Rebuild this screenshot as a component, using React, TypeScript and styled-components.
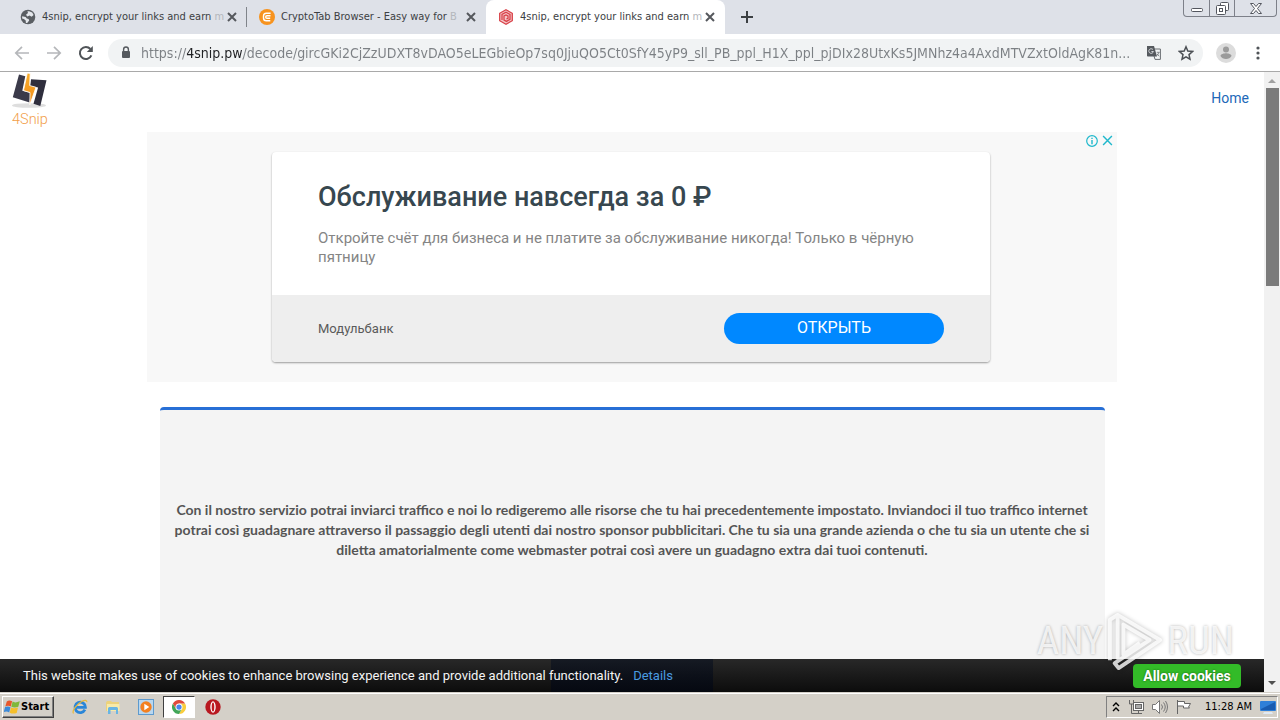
import React from "react";
import styled, { createGlobalStyle } from "styled-components";

const ui = `"DejaVu Sans Condensed", "DejaVu Sans", sans-serif`;

const GlobalStyle = createGlobalStyle`
  *, *::before, *::after { box-sizing: border-box; }
  body { margin: 0; background: #fff; font-family: Roboto, sans-serif; }
  button { border: 0; padding: 0; margin: 0; background: none; color: inherit; font: inherit; }
  h1, h2, p { margin: 0; }
  svg { display: block; flex: none; }
`;

const Desktop = styled.div`
  display: flex;
  flex-direction: column;
  height: 100vh;
  overflow: hidden;
`;

/* ---------- tab strip ---------- */

const TabStrip = styled.header`
  display: flex;
  align-items: flex-start;
  height: 34px;
  flex: none;
  padding: 0 3px 0 8px;
  background: #dee1e8;
`;

const Tab = styled.div<{ $active?: boolean; $divider?: boolean }>`
  position: relative;
  display: flex;
  align-items: center;
  gap: 6px;
  flex: 0 1 239px;
  min-width: 0;
  height: 34px;
  padding: 0 10px 0 12px;
  border-radius: 8px 8px 0 0;
  background: ${(p) => (p.$active ? "#fff" : "transparent")};

  &::after {
    content: "";
    position: absolute;
    right: 0;
    top: 7px;
    width: 1px;
    height: 20px;
    background: ${(p) => (p.$divider ? "#80848a" : "transparent")};
  }
`;

const TabTitle = styled.button`
  flex: 1;
  min-width: 0;
  white-space: nowrap;
  text-align: left;
  font: 11px/16px ${ui};
  color: #3c4043;
`;

const Faded = styled.span`
  color: #b4b7bc;
`;

const GlyphButton = styled.button<{ $w?: number }>`
  display: flex;
  align-items: center;
  justify-content: center;
  flex: none;
  width: ${(p) => p.$w ?? 32}px;
  height: 100%;
`;

const WindowButtons = styled.div`
  display: flex;
  margin-left: auto;
  height: 17px;
  border: 1px solid #7d8089;
  border-top: 0;
  border-radius: 0 0 4px 4px;

  button + button { border-left: 1px solid #7d8089; }
`;

/* ---------- toolbar ---------- */

const Toolbar = styled.div`
  display: flex;
  align-items: center;
  flex: none;
  height: 38px;
  padding: 0 6px;
  background: #fff;
  border-bottom: 1px solid #a9a9a9;
`;

const Omnibox = styled.div`
  display: flex;
  align-items: center;
  flex: 1;
  min-width: 0;
  height: 28px;
  margin: 0 7px 0 6px;
  padding: 0 1px 0 10px;
  border-radius: 14px;
  background: #f1f3f4;
`;

const Address = styled.input`
  flex: 1;
  min-width: 0;
  height: 20px;
  margin: 0 6px 0 7px;
  padding: 0;
  border: 0;
  outline: 0;
  font: 14px/20px ${ui};
  color: #74787c;
  background: linear-gradient(90deg, #7c8084 46px, #202124 46px, #202124 102px, #7c8084 102px);
  background-clip: text;
  -webkit-text-fill-color: transparent;
`;

/* ---------- page ---------- */

const Viewport = styled.div`
  position: relative;
  display: flex;
  flex: 1;
  min-height: 0;
  overflow: hidden;
  background: #fff;
`;

const Page = styled.main`
  flex: 1;
  min-width: 0;
  display: flex;
  flex-direction: column;
  align-items: center;
  overflow: hidden;
`;

const SiteHeader = styled.div`
  display: flex;
  justify-content: space-between;
  width: 100%;
  height: 60px;
  flex: none;
  padding: 0 15px 0 12px;
`;

const HomeLink = styled.a`
  padding-top: 16px;
  font: 14px/20px Roboto, sans-serif;
  color: #2168b8;
  text-decoration: none;
`;

const AdBanner = styled.section`
  position: relative;
  flex: none;
  width: 970px;
  max-width: 100%;
  height: 250px;
  padding: 20px 127px 20px 125px;
  background: #f8f8f8;
`;

const AdChoices = styled.div`
  position: absolute;
  top: 0;
  right: 3px;
  display: flex;
  gap: 3px;
  height: 17px;
`;

const AdCard = styled.article`
  display: flex;
  flex-direction: column;
  height: 210px;
  overflow: hidden;
  border-radius: 4px;
  background: #fff;
  box-shadow: 0 1px 2px rgba(0, 0, 0, 0.38);
`;

const AdCopy = styled.div`
  flex: 1;
  padding: 28px 46px 0;
`;

const AdTitle = styled.h1`
  font: 500 27px/34px Roboto, sans-serif;
  color: #37474f;
`;

const AdText = styled.p`
  margin-top: 15px;
  font: 15px/19px Roboto, sans-serif;
  color: #858585;
`;

const AdFooter = styled.div`
  display: flex;
  align-items: center;
  justify-content: space-between;
  height: 67px;
  padding: 0 46px;
  background: #eee;
  font: 13px/20px Roboto, sans-serif;
  color: #5a5a5a;
`;

const OpenButton = styled.button`
  width: 220px;
  height: 31px;
  padding-bottom: 2px;
  border-radius: 16px;
  background: #0088ff;
  color: #fff;
  font: 16px/20px Roboto, sans-serif;
`;

const InfoPanel = styled.section`
  flex: none;
  width: 945px;
  max-width: 100%;
  height: 400px;
  margin-top: 25px;
  padding: 90px 14px;
  border-top: 3px solid #276fd6;
  border-radius: 4px;
  background: #f4f4f4;
  text-align: center;
  font: bold 14px/20px Lato, sans-serif;
  color: #555;
`;

const ScrollBar = styled.div`
  display: flex;
  flex-direction: column;
  flex: none;
  width: 16px;
  background: #f1f1f1;
`;

const ScrollThumb = styled.div`
  width: 13px;
  height: 198px;
  margin: 0 auto auto;
  background: #7b7b7b;
`;

const CookieBar = styled.aside`
  position: absolute;
  left: 0;
  right: 16px;
  bottom: 0;
  display: flex;
  align-items: center;
  height: 33px;
  padding: 0 23px;
  background:
    linear-gradient(rgba(0, 10, 30, 0.45), rgba(0, 6, 20, 0.6)) center / 162px 100% no-repeat,
    linear-gradient(#282828, #0c0c0c);
  color: #f4f4f4;
  font: 13px/20px Roboto, sans-serif;

  a { margin-left: 10px; color: #4a9be0; text-decoration: none; }
`;

const AllowButton = styled.button`
  width: 108px;
  height: 24px;
  margin-left: auto;
  border-radius: 4px;
  background: #33bb28;
  color: #fff;
  font: bold 14px/20px Roboto, sans-serif;
  text-shadow: 0 0 2px #14500e;
`;

const Watermark = styled.div`
  position: absolute;
  right: 46px;
  bottom: 18px;
  display: flex;
  align-items: center;
  gap: 4px;
  height: 66px;
  color: rgba(255, 255, 255, 0.8);
  font: 39px/44px "Roboto Condensed", Roboto, sans-serif;
  text-shadow: 0 0 3px rgba(0, 0, 0, 0.3);
  pointer-events: none;

  svg { filter: drop-shadow(0 0 2px rgba(0, 0, 0, 0.3)); }
`;

/* ---------- taskbar ---------- */

const Taskbar = styled.footer`
  display: flex;
  align-items: center;
  flex: none;
  height: 28px;
  padding: 1px 2px 0;
  border-top: 1px solid #d4d0c8;
  background: #d4d0c8;
  box-shadow: inset 0 1px #fff;
`;

const StartButton = styled.button`
  display: flex;
  align-items: center;
  gap: 1px;
  width: 52px;
  height: 22px;
  margin-right: 10px;
  padding-left: 1px;
  border: 1px solid;
  border-color: #fff #404040 #404040 #fff;
  box-shadow: inset -1px -1px #808080;
  font: bold 11px/16px ${ui};
  color: #000;
`;

const TaskItem = styled.button<{ $active?: boolean }>`
  display: flex;
  align-items: center;
  justify-content: center;
  width: 32px;
  height: 22px;
  margin-right: ${(p) => (p.$active ? 2 : 1)}px;
  border: 1px solid;
  border-color: ${(p) => (p.$active ? "#404040 #fff #fff #404040" : "transparent")};
  background: ${(p) => (p.$active ? "#fff" : "transparent")};
`;

const Tray = styled.div`
  display: flex;
  align-items: center;
  gap: 8px;
  height: 22px;
  margin-left: auto;
  padding: 0 1px 0 5px;
  border: 1px solid;
  border-color: #808080 #fff #fff #808080;
  font: 11px/16px ${ui};
  color: #000;

  time { margin-left: 5px; white-space: nowrap; }
`;

/* ---------- drawings ---------- */

const GlobeIcon = () => (
  <svg width="16" height="16" viewBox="0 0 16 16">
    <circle cx="8" cy="8" r="7.3" fill="#5a5e63" />
    <path d="M2.2 7.2 5.6 8l1.2 1.6 1.8.3.6 1.7-2 2.4-1.3.1-.2-2.5-1.8-1.6-1.8-.5zM7.4 2.2l1.8.1 3 1.3 1.4 2.5-2 1.7-2-1.2-2.3.8L6 5.7 8 4z" fill="#e4e7ec" />
  </svg>
);

const CryptoIcon = () => (
  <svg width="16" height="16" viewBox="0 0 16 16">
    <circle cx="8" cy="8" r="8" fill="#f7931e" />
    <path d="M11.6 4.2H7.3a2.8 2.8 0 0 0-2.8 2.8v2a2.8 2.8 0 0 0 2.8 2.8h4M11.5 6.7H8A1.3 1.3 0 0 0 8 9.3h3.2" fill="none" stroke="#fff" strokeWidth="1.4" />
  </svg>
);

const HexIcon = () => (
  <svg width="16" height="16" viewBox="0 0 16 16" fill="none" stroke="#d9434a">
    <path d="M8 .8 14.3 4.3v7.4L8 15.2 1.7 11.7V4.3z" fill="#f4c6c8" strokeWidth="1.3" />
    <path d="M4 11V5.5L8 3.3l4 2.2v4.8L8.5 12.4 6 11V7l2-1.1 2 1.1v2.3L8.4 10" strokeWidth="1.3" />
  </svg>
);

const CrossIcon = ({ size = 10, color = "#55585d", weight = 2 }) => (
  <svg width={size} height={size} viewBox="0 0 10 10">
    <path d="m1 1 8 8M9 1 1 9" stroke={color} strokeWidth={weight} />
  </svg>
);

const ArrowIcon = ({ back = false }) => (
  <svg width="16" height="16" viewBox="0 0 16 16" fill="none" stroke="#b5b7ba" strokeWidth="1.7">
    <path d={back ? "M15 8H2M8 1.8 1.8 8 8 14.2" : "M1 8h13M8 1.8 14.2 8 8 14.2"} />
  </svg>
);

const ReloadIcon = () => (
  <svg width="16" height="16" viewBox="0 0 16 16">
    <path d="M13.4 10.4A6 6 0 1 1 12.4 4" fill="none" stroke="#505458" strokeWidth="2" />
    <path d="M14.8 1v6H8.8z" fill="#505458" />
  </svg>
);

const LockIcon = () => (
  <svg width="16" height="16" viewBox="0 0 16 16">
    <path d="M5.6 6.500V4.400a2.400 2.400 0 0 1 4.800 0v2.100" fill="none" stroke="#55595e" strokeWidth="1.400" />
    <rect x="4" y="6" width="8" height="7" rx="1" fill="#55595e" />
  </svg>
);

const TranslateIcon = () => (
  <svg width="16" height="16" viewBox="0 0 16 16">
    <path d="M6 4h8.4v10.4H9z" fill="#f1f3f4" stroke="#6a6e73" />
    <path d="M1 1h7l3 10.6H1.8A.8.8 0 0 1 1 10.8z" fill="#55595e" />
    <path d="M7 4.7A2.3 2.3 0 1 0 7.4 6.5H5.4" fill="none" stroke="#dfe1e4" strokeWidth=".9" />
    <path d="M10.7 7.3h3M12.8 7.5c-.4 1.5-1.2 2.5-2 3.2M11.2 9c.4.7 1 1.5 2 2.2" fill="none" stroke="#6a6e73" strokeWidth=".8" />
  </svg>
);

const StarIcon = () => (
  <svg width="16" height="16" viewBox="0 0 16 16">
    <path d="m8 1.8 1.8 4.3 4.7.4-3.5 3.1 1 4.6L8 11.8l-4 2.4 1-4.6-3.5-3.1 4.7-.4z" fill="none" stroke="#4c5055" strokeWidth="1.5" />
  </svg>
);

const AvatarIcon = () => (
  <svg width="20" height="20" viewBox="0 0 20 20">
    <circle cx="10" cy="10" r="10" fill="#dcdcdc" />
    <circle cx="10" cy="6.5" r="3" fill="#9b9b9b" />
    <path d="M4.5 13c0-2 3.6-2.8 5.500-2.800s5.500.8 5.500 2.800c-1 2-3 3-5.500 3s-4.500-1-5.500-3z" fill="#9b9b9b" />
  </svg>
);

const DotsIcon = () => (
  <svg width="4" height="16" viewBox="0 0 4 16" fill="#505458">
    <circle cx="2" cy="3" r="1.6" />
    <circle cx="2" cy="8" r="1.6" />
    <circle cx="2" cy="13" r="1.6" />
  </svg>
);

const SiteLogo = () => (
  <svg width="36" height="56" viewBox="0 0 36 56" role="img" aria-label="4Snip">
    <defs>
      <linearGradient id="bolt" x1="0" y1="0" x2="0" y2="1">
        <stop offset="0" stopColor="#f9ad2b" />
        <stop offset="1" stopColor="#f08c1c" />
      </linearGradient>
    </defs>
    <ellipse cx="17" cy="33.500" rx="17" ry="2.300" fill="#dedede" />
    <path d="M7 2.500 13.300 4.200 10.300 18.800l8.200 2.200-.9 9.500L.8 25.200z" fill="#3b3a4a" />
    <path d="m19 7.300 15.500.9L28.300 34l-6.800-2.200 4.600-16.300-8-1.400z" fill="#2f2e3d" />
    <path d="m15.300 1 2.900.5-.5 12 6.300 1.800-6.200 17.500.2-12.300-6.500-2z" fill="url(#bolt)" stroke="#fff" strokeWidth=".8" />
    <text x="0" y="51.500" fontFamily="Roboto, sans-serif" fontWeight="300" fontSize="14.500" fill="#f2a04a">4Snip</text>
  </svg>
);

const WindowsIcon = () => (
  <svg width="16" height="16" viewBox="0 0 16 16">
    <path d="M2.800 2.500Q5 .5 8.100 2.200L6.800 7.400Q4 6 1.300 7.400z" fill="#e8572b" />
    <path d="M8.600 2.600Q11 4.300 15.800 2.300L14.300 7.800Q10.500 9.300 7.300 7.700z" fill="#7fb83a" />
    <path d="M1.100 8Q4 6.700 6.500 8.200L5.200 13.500Q2.500 11.900 -.3 13.200z" fill="#3c8ad8" />
    <path d="M7 8.500Q10 10 14 8.400L12.700 13.900Q9 15.300 5.700 13.700z" fill="#f5bf2b" />
  </svg>
);

const ExplorerIcon = () => (
  <svg width="16" height="16" viewBox="0 0 16 16" fill="none">
    <path d="M12.900 10.600A5.200 5.200 0 1 1 13.400 8.300H4" stroke="#2a86d8" strokeWidth="2.800" />
    <path d="M1.500 14.500C-.5 12 5 5 10 2.300c3-1.500 5-1.300 4.800.8" stroke="#e8b93a" strokeWidth="1.200" />
  </svg>
);

const FolderIcon = () => (
  <svg width="16" height="16" viewBox="0 0 16 16">
    <path d="M1 3.500 2 2h4l1 1h7v9H1z" fill="#ecd27c" />
    <path d="M2 5h12.500v7H2z" fill="#f8eaa8" />
    <path d="M3 15V9.500Q3 8 4.500 8h7Q13 8 13 9.500V15h-2v-4H5.500v4z" fill="#69b5e3" />
  </svg>
);

const MediaIcon = () => (
  <svg width="16" height="16" viewBox="0 0 16 16">
    <rect x=".5" y=".5" width="15" height="15" fill="#b9d7ef" stroke="#5d9ace" />
    <circle cx="8" cy="8" r="5.700" fill="#f38020" />
    <path d="M6.300 4.800 11.300 8l-5 3.200z" fill="#fff" />
  </svg>
);

const ChromeIcon = () => (
  <svg width="14" height="14" viewBox="0 0 16 16">
    <path d="M8 4h6.930A8 8 0 0 1 8 16l3.460-6z" fill="#f9cd3c" />
    <path d="M1.070 4A8 8 0 0 0 8 16l3.460-6L8 8 4.540 10z" fill="#41a658" />
    <path d="M1.070 4A8 8 0 0 1 14.930 4H8L4.540 10z" fill="#df4a3c" />
    <circle cx="8" cy="8" r="4" fill="#fff" />
    <circle cx="8" cy="8" r="3" fill="#4a84ee" />
  </svg>
);

const OperaIcon = () => (
  <svg width="16" height="16" viewBox="0 0 16 16">
    <circle cx="8" cy="8" r="7.700" fill="#b81820" />
    <ellipse cx="8" cy="8" rx="2.700" ry="5.700" fill="#fff" />
    <ellipse cx="8" cy="8" rx="1.300" ry="4.600" fill="#c01a22" />
  </svg>
);

const tabs = [
  { title: "4snip, encrypt your links and earn ", last: "m", icon: <GlobeIcon />, divider: true },
  { title: "CryptoTab Browser - Easy way for ", last: "B", icon: <CryptoIcon /> },
  { title: "4snip, encrypt your links and earn ", last: "m", icon: <HexIcon />, active: true },
];

const url =
  "https://4snip.pw/decode/gircGKi2CjZzUDXT8vDAO5eLEGbieOp7sq0JjuQO5Ct0SfY45yP9_sll_PB_ppl_H1X_ppl_pjDIx28UtxKs5JMNhz4a4AxdMTVZxtOldAgK81n...";

export default function App() {
  return (
    <Desktop>
      <GlobalStyle />
      <TabStrip>
        {tabs.map((t, i) => (
          <Tab key={i} $active={t.active} $divider={t.divider}>
            {t.icon}
            <TabTitle>
              {t.title}
              <Faded>{t.last}</Faded>
            </TabTitle>
            <GlyphButton $w={10} aria-label="Close tab">
              <CrossIcon />
            </GlyphButton>
          </Tab>
        ))}
        <GlyphButton $w={44} aria-label="New tab">
          <svg width="12" height="12" viewBox="0 0 12 12">
            <path d="M6 0v12M0 6h12" stroke="#3c4043" strokeWidth="2" />
          </svg>
        </GlyphButton>
        <WindowButtons>
          <GlyphButton $w={25} aria-label="Minimize">
            <svg width="12" height="12" viewBox="0 0 12 12">
              <rect x=".5" y="6.500" width="11" height="3" rx="1" fill="#fff" stroke="#53565e" />
            </svg>
          </GlyphButton>
          <GlyphButton $w={25} aria-label="Restore">
            <svg width="13" height="13" viewBox="0 0 13 13" fill="#fff" stroke="#53565e">
              <rect x="4.500" y=".5" width="8" height="8" rx="1" />
              <rect x=".5" y="3.500" width="9" height="9" rx="1" />
              <rect x="3.500" y="6.500" width="3" height="3" />
            </svg>
          </GlyphButton>
          <GlyphButton $w={42} aria-label="Close window">
            <svg width="12" height="11" viewBox="0 0 12 11">
              <path d="M.5.5h3L6 3.500 8.500.5h3l-4 5 4 5h-3L6 7.500l-2.500 3h-3l4-5z" fill="#fff" stroke="#53565e" />
            </svg>
          </GlyphButton>
        </WindowButtons>
      </TabStrip>

      <Toolbar>
        <GlyphButton aria-label="Back"><ArrowIcon back /></GlyphButton>
        <GlyphButton aria-label="Forward"><ArrowIcon /></GlyphButton>
        <GlyphButton aria-label="Reload"><ReloadIcon /></GlyphButton>
        <Omnibox>
          <LockIcon />
          <Address aria-label="Address" defaultValue={url} />
          <GlyphButton aria-label="Translate this page"><TranslateIcon /></GlyphButton>
          <GlyphButton aria-label="Bookmark this page"><StarIcon /></GlyphButton>
        </Omnibox>
        <GlyphButton aria-label="Profile"><AvatarIcon /></GlyphButton>
        <GlyphButton aria-label="Menu"><DotsIcon /></GlyphButton>
      </Toolbar>

      <Viewport>
        <Page>
          <SiteHeader>
            <SiteLogo />
            <HomeLink href="#home">Home</HomeLink>
          </SiteHeader>
          <AdBanner>
            <AdChoices>
              <GlyphButton $w={13} aria-label="Ad information">
                <svg width="12" height="12" viewBox="0 0 12 12" fill="none" stroke="#1fb8cc">
                  <circle cx="6" cy="6" r="5.300" strokeWidth="1.200" />
                  <path d="M6 5v4.200M6 2.700V4" strokeWidth="1.400" />
                </svg>
              </GlyphButton>
              <GlyphButton $w={13} aria-label="Close ad">
                <CrossIcon size={11} color="#1fb8cc" weight={1.3} />
              </GlyphButton>
            </AdChoices>
            <AdCard>
              <AdCopy>
                <AdTitle>Обслуживание навсегда за 0 ₽</AdTitle>
                <AdText>
                  Откройте счёт для бизнеса и не платите за обслуживание никогда! Только в чёрную пятницу
                </AdText>
              </AdCopy>
              <AdFooter>
                <span>Модульбанк</span>
                <OpenButton>ОТКРЫТЬ</OpenButton>
              </AdFooter>
            </AdCard>
          </AdBanner>
          <InfoPanel>
            <p>
              Con il nostro servizio potrai inviarci traffico e noi lo redigeremo alle risorse che tu hai
              precedentemente impostato. Inviandoci il tuo traffico internet potrai così guadagnare attraverso
              il passaggio degli utenti dai nostro sponsor pubblicitari. Che tu sia una grande azienda o che tu
              sia un utente che si diletta amatorialmente come webmaster potrai così avere un guadagno extra
              dai tuoi contenuti.
            </p>
          </InfoPanel>
        </Page>
        <ScrollBar>
          <svg width="16" height="16" viewBox="0 0 16 16"><path d="m4 11 4-4 4 4z" fill="#a0a0a0" /></svg>
          <ScrollThumb />
          <svg width="16" height="16" viewBox="0 0 16 16"><path d="m4 5 4 4 4-4z" fill="#505050" /></svg>
        </ScrollBar>
        <CookieBar>
          <span>This website makes use of cookies to enhance browsing experience and provide additional functionality.</span>
          <a href="#details">Details</a>
          <AllowButton>Allow cookies</AllowButton>
        </CookieBar>
        <Watermark>
          <span>ANY</span>
          <svg width="56" height="62" viewBox="0 0 58 64" fill="none" stroke="rgba(255,255,255,.8)" strokeWidth="4" strokeLinejoin="round">
            <path d="M3 52V10l8-5v46M11 5l44 26-43 29-4-5 36-24-27-16v31l17-12" />
          </svg>
          <span>RUN</span>
        </Watermark>
      </Viewport>

      <Taskbar>
        <StartButton><WindowsIcon />Start</StartButton>
        <TaskItem aria-label="Internet Explorer"><ExplorerIcon /></TaskItem>
        <TaskItem aria-label="File Explorer"><FolderIcon /></TaskItem>
        <TaskItem aria-label="Media Player"><MediaIcon /></TaskItem>
        <TaskItem $active aria-label="Chrome"><ChromeIcon /></TaskItem>
        <TaskItem aria-label="Opera"><OperaIcon /></TaskItem>
        <Tray>
          <svg width="8" height="12" viewBox="0 0 8 12" fill="none" stroke="#000" strokeWidth="1.400">
            <path d="m1 5 3-3 3 3M1 10l3-3 3 3" />
          </svg>
          <svg width="16" height="16" viewBox="0 0 16 16" fill="#fff" stroke="#666">
            <rect x="5.500" y="3.500" width="10" height="8" />
            <rect x="7.500" y="5.500" width="6" height="4" fill="#aaa" />
            <path d="M7 14.500h7M10.500 12v2M1.500 1v4h4V1M3.500 5v9.500h4" fill="none" />
          </svg>
          <svg width="16" height="16" viewBox="0 0 16 16" fill="#fff" stroke="#777">
            <path d="M.5 5.500h3l4-4v13l-4-4h-3z" />
            <path d="M9.500 5.500q2 2.500 0 5M11.500 3.500q3.500 4.500 0 9M13.500 2q4 6 0 12" fill="none" />
          </svg>
          <svg width="16" height="16" viewBox="0 0 16 16" fill="#fff" stroke="#666">
            <path d="M1.500 1v14M1.500 2.500h7v2h6l-2 3.500 1 1h-6v-2h-6z" />
          </svg>
          <time>11:28 AM</time>
          <svg width="16" height="16" viewBox="0 0 16 16">
            <rect y="2" width="16" height="10" rx="1" fill="#2f7fd8" />
            <path d="M1 10 15 3v8H1z" fill="#195bb0" />
            <path d="M4 13h8l1 2H3z" fill="#dfe9f4" />
          </svg>
        </Tray>
      </Taskbar>
    </Desktop>
  );
}
